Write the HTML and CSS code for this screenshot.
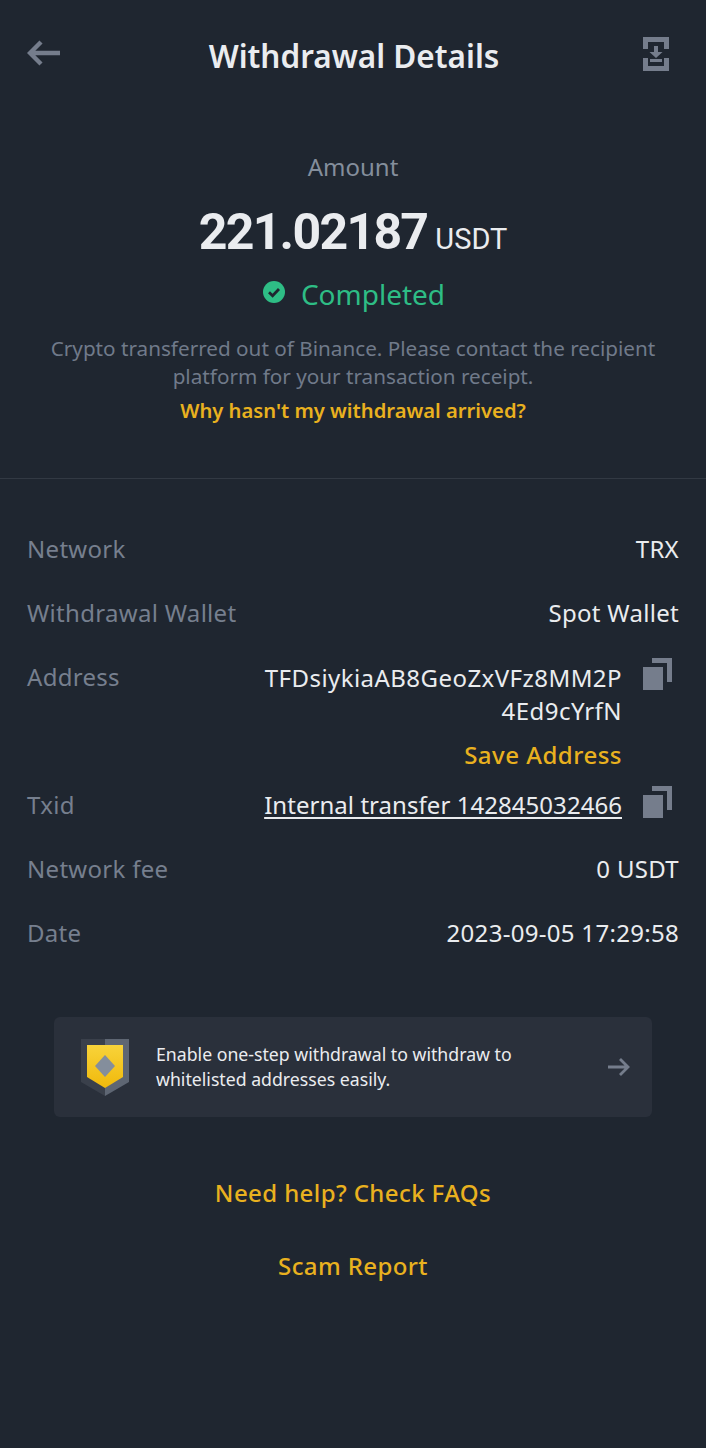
FILE: index.html
```html
<!DOCTYPE html>
<html lang="en">
  <head>
    <meta charset="UTF-8" />
    <meta name="viewport" content="width=device-width, initial-scale=1.0" />
    <title>Withdrawal Details</title>
    <link rel="stylesheet" href="styles.css">
  </head>
  <body>
    <header class="topbar">
      <svg class="backIcon" viewBox="0 0 34 26">
        <path d="M14 2 3 13l11 11M3 13h30" fill="none" stroke="#757d8c" stroke-width="4.4"/>
      </svg>
      <h1>Withdrawal Details</h1>
      <svg class="saveIcon" viewBox="0 0 28 34">
        <path d="M1 0h26v12h-5V5H6v7H1zM1 21h5v8h16v-8h5v13H1z" fill="#757d8c"/>
        <path d="M12 9h4v6h4.500L14 21l-6.500-6H12zM8 22h12v3H8z" fill="#757d8c"/>
      </svg>
    </header>

    <section class="summary">
      <div class="amountLabel">Amount</div>
      <div class="amount"><span class="number">221.02187</span><span class="coin">USDT</span></div>
      <div class="status">
        <svg class="statusIcon" viewBox="0 0 22 22">
          <circle cx="11" cy="11" r="11" fill="#2ebd85"/>
          <path d="M6 11.200 9.600 14.700 16 8" fill="none" stroke="#1f2630" stroke-width="2.800"/>
        </svg>
        <span>Completed</span>
      </div>
      <p class="note">Crypto transferred out of Binance. Please contact the recipient platform for your transaction receipt.</p>
      <a class="whyLink">Why hasn't my withdrawal arrived?</a>
    </section>

    <section class="details">
      <div class="row">
        <div class="label">Network</div>
        <div class="value">TRX</div>
      </div>
      <div class="row">
        <div class="label">Withdrawal Wallet</div>
        <div class="value">Spot Wallet</div>
      </div>
      <div class="row rowCopy rowAddress">
        <div class="label">Address</div>
        <div class="valueBox">
          <div class="value address">TFDsiykiaAB8GeoZxVFz8MM2P 4Ed9cYrfN</div>
          <a class="saveAddress">Save Address</a>
        </div>
        <svg class="copyIcon" viewBox="0 0 30 32">
          <path d="M9 0h20v24h-5V5H9z" fill="#757d8c"/>
          <path d="M0 9h20v23H0z" fill="#757d8c"/>
        </svg>
      </div>
      <div class="row rowCopy">
        <div class="label">Txid</div>
        <div class="value txid">Internal transfer 142845032466</div>
        <svg class="copyIcon" viewBox="0 0 30 32">
          <path d="M9 0h20v24h-5V5H9z" fill="#757d8c"/>
          <path d="M0 9h20v23H0z" fill="#757d8c"/>
        </svg>
      </div>
      <div class="row">
        <div class="label">Network fee</div>
        <div class="value">0 USDT</div>
      </div>
      <div class="row">
        <div class="label">Date</div>
        <div class="value">2023-09-05 17:29:58</div>
      </div>
    </section>

    <div class="promo">
      <svg class="shield" viewBox="0 0 50 58">
        <path d="M1 1h24v57L1 44z" fill="#3a404b"/>
        <path d="M25 1h24v43L25 58z" fill="#5e6673"/>
        <path d="M7 7h36v32L25 50 7 39z" fill="url(#gold)"/>
        <path d="M25 17 35 28 25 39 15 28z" fill="#848e9c"/>
        <defs>
          <linearGradient id="gold" x1="0" y1="0" x2="0" y2="1">
            <stop offset="0" stop-color="#f8d33a"/>
            <stop offset="1" stop-color="#f0b90b"/>
          </linearGradient>
        </defs>
      </svg>
      <div class="promoText">Enable one-step withdrawal to withdraw to whitelisted addresses easily.</div>
      <svg class="promoArrow" viewBox="0 0 24 20">
        <path d="M13 2l8 8-8 8M21 10H1" fill="none" stroke="#757d8c" stroke-width="2.800"/>
      </svg>
    </div>

    <div class="links">
      <a>Need help? Check FAQs</a>
      <a>Scam Report</a>
    </div>
  </body>
</html>
```

FILE: styles.css
```css
* {
  margin: 0;
  padding: 0;
  box-sizing: border-box;
}

html,
body {
  height: 100%;
  width: 100%;
}

body {
  background: #1f2630;
  font-family: "Noto Sans", sans-serif;
  color: #eaecef;
  overflow: hidden;
}

.topbar {
  height: 90px;
  padding: 20px 36px 0 27px;
  display: flex;
  align-items: center;
  justify-content: space-between;
}

.topbar h1 {
  margin-left: 5px;
  font-size: 31.500px;
  font-weight: 600;
  color: #eaecef;
}

.backIcon {
  width: 34px;
  height: 26px;
  margin-bottom: 4px;
}

.saveIcon {
  width: 28px;
  height: 34px;
  margin-bottom: 2px;
}

.summary {
  height: 389px;
  padding-top: 60px;
  display: flex;
  flex-direction: column;
  align-items: center;
  border-bottom: 1px solid #323943;
}

.amountLabel {
  font-size: 24px;
  line-height: 34px;
  color: #848e9c;
}

.amount {
  margin-top: 20px;
  display: flex;
  align-items: baseline;
  gap: 8px;
}

.number {
  font-family: "Roboto", sans-serif;
  font-size: 50px;
  line-height: 56px;
  font-weight: 700;
  letter-spacing: -1.700px;
}

.coin {
  font-family: "Roboto", sans-serif;
  font-size: 29px;
}

.status {
  margin-top: 14px;
  padding-left: 2px;
  display: flex;
  align-items: center;
  gap: 16px;
  font-size: 28px;
  line-height: 40px;
  color: #2ebd85;
}

.statusIcon {
  width: 22px;
  height: 22px;
  margin-bottom: 5px;
}

.note {
  margin-top: 20px;
  width: 640px;
  font-size: 20.700px;
  line-height: 28px;
  text-align: center;
  color: #707a8a;
}

.whyLink {
  margin-top: 5px;
  font-size: 20.200px;
  line-height: 30px;
  font-weight: 600;
  color: #e9b11f;
}

.details {
  padding: 38px 27px 0;
  display: flex;
  flex-direction: column;
}

.row {
  min-height: 64px;
  display: flex;
  justify-content: space-between;
  font-size: 24px;
  line-height: 64px;
  letter-spacing: 0.300px;
}

.label {
  color: #767f8e;
}

.value {
  color: #eaecef;
}

.rowCopy .label {
  flex: 1;
}

.rowAddress {
  height: 128px;
}

.valueBox {
  width: 370px;
  display: flex;
  flex-direction: column;
  align-items: flex-end;
}

.address {
  padding-top: 16px;
  line-height: 33px;
  text-align: right;
  letter-spacing: 0.450px;
}

.saveAddress {
  margin-top: 11px;
  line-height: 34px;
  font-weight: 500;
  letter-spacing: 0.500px;
  color: #e9b11f;
}

.txid {
  letter-spacing: 0.050px;
  text-decoration: underline;
  text-underline-offset: 3px;
  text-decoration-thickness: 2px;
}

.copyIcon {
  width: 30px;
  height: 32px;
  margin: 13px 6px 0 21px;
  flex: none;
}

.promo {
  margin: 52px 54px 0;
  height: 100px;
  padding: 0 21px 0 26px;
  display: flex;
  align-items: center;
  background: #2a303b;
  border-radius: 6px;
}

.shield {
  width: 50px;
  height: 58px;
  flex: none;
}

.promoText {
  margin-left: 26px;
  padding-right: 60px;
  flex: 1;
  font-size: 17.700px;
  line-height: 25px;
  color: #eaecef;
}

.promoArrow {
  width: 24px;
  height: 20px;
  flex: none;
}

.links {
  margin-top: 59px;
  display: flex;
  flex-direction: column;
  align-items: center;
  gap: 39px;
  font-size: 24px;
  line-height: 34px;
  font-weight: 500;
  letter-spacing: 0.400px;
  color: #e9b11f;
}
```
